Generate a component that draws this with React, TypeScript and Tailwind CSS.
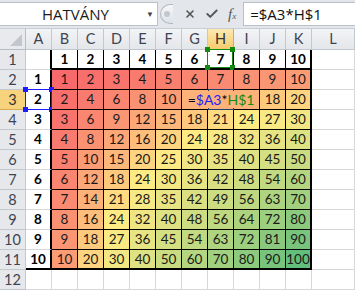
import React from "react";
import { X, Check } from "lucide-react";

const cols = ["A", "B", "C", "D", "E", "F", "G", "H", "I", "J", "K", "L"];
const rows = [1, 2, 3, 4, 5, 6, 7, 8, 9, 10, 11, 12];

// excel 3-colour scale: red -> yellow (median 24) -> green
function scaleColor(v: number) {
  const lo = [248, 105, 107];
  const mid = [255, 235, 132];
  const hi = [99, 190, 123];
  let a = lo;
  let b = mid;
  let t = (v - 1) / 23;
  if (v > 24) {
    a = mid;
    b = hi;
    t = (v - 24) / 76;
  }
  const c = a.map((x, i) => Math.round(x + (b[i] - x) * t));
  return `rgb(${c[0]},${c[1]},${c[2]})`;
}

function Handle({ pos, color }: { pos: string; color: string }) {
  return <span className={`absolute w-[5px] h-[5px] ${pos} ${color}`} />;
}

function Cell({ r, c }: { r: number; c: number }) {
  // c: 0 = A, 1..10 = B..K, 11 = L
  const base = "relative flex items-center justify-center text-[13.5px] border-r border-b";

  if (r === 12 || c === 11) {
    return <div className={`${base} border-[#d8d8d8]`} />;
  }

  if (c === 0) {
    const bottom = r === 11 ? "border-b-2 border-b-black" : "border-b-[#d8d8d8]";
    return (
      <div className={`${base} border-r-2 border-r-black ${bottom} font-bold text-black`}>
        {r > 1 ? r - 1 : ""}
        {r === 3 && (
          <span className="absolute -left-px -top-px -right-[2px] -bottom-px border-[1.5px] border-[#1d1dff]">
            <Handle pos="-left-[3px] -top-[3px]" color="bg-[#1d1dff]" />
            <Handle pos="-right-[3px] -top-[3px]" color="bg-[#1d1dff]" />
            <Handle pos="-left-[3px] -bottom-[3px]" color="bg-[#1d1dff]" />
            <Handle pos="-right-[3px] -bottom-[3px]" color="bg-[#1d1dff]" />
          </span>
        )}
      </div>
    );
  }

  const right = c === 10 ? "border-r-2" : "";
  if (r === 1) {
    return (
      <div className={`${base} ${right} border-b-2 border-black font-bold text-black`}>
        {c}
        {c === 7 && (
          <span className="absolute -left-px -top-px right-0 bottom-0 border-[1.5px] border-[#128a12]">
            <Handle pos="-left-[3px] -top-[3px]" color="bg-[#128a12]" />
            <Handle pos="-right-[3px] -top-[3px]" color="bg-[#128a12]" />
            <Handle pos="-left-[3px] -bottom-[3px]" color="bg-[#128a12]" />
            <Handle pos="-right-[3px] -bottom-[3px]" color="bg-[#128a12]" />
          </span>
        )}
      </div>
    );
  }

  const v = (r - 1) * c;
  const bottom = r === 11 ? "border-b-2" : "";

  // cell H3 is in edit mode, its text spills over G3 and I3
  if (r === 3 && c >= 6 && c <= 8) {
    const noRight = c === 6 || c === 7 ? "border-r-0" : "";
    return (
      <div className={`${base} ${noRight} border-black`} style={{ background: scaleColor(14) }}>
        {c === 7 && (
          <>
            <span className="absolute left-0 right-0 -top-px h-[2px] border-x border-t border-[#20406e]" />
            <span className="absolute left-0 right-0 -bottom-px h-[2px] border-x border-b border-[#20406e]" />
            <span className="relative z-10 whitespace-nowrap text-[14px]">
              <span className="text-black">=</span>
              <span className="text-[#1d1dff]">$A3</span>
              <span className="text-black">*</span>
              <span className="text-[#128a12]">H$1</span>
            </span>
          </>
        )}
      </div>
    );
  }

  return (
    <div className={`${base} ${right} ${bottom} border-black text-[#1a1a1a]`} style={{ background: scaleColor(v) }}>
      {v}
    </div>
  );
}

export default function App() {
  return (
    <div className="w-[355px] h-[291px] overflow-hidden bg-white font-['Lato',sans-serif]">
      {/* formula bar */}
      <div className="h-[29px] flex items-center bg-[#e3e7ec] border-b border-[#c9ced5]">
        <div className="h-[24px] w-[158px] bg-white border-y border-r border-[#b9c0c8] flex items-center pl-[42px] text-[15px] text-[#1a1a1a] font-['Open_Sans',sans-serif]">
          <span className="flex-1">HATVÁNY</span>
          <span className="text-[8px] text-[#444] mr-[3px]">▼</span>
        </div>
        <div className="ml-[2px] w-[13px] h-[20px] rounded-l-full border-y border-l border-[#b3b9c1] bg-gradient-to-b from-[#f6f7f9] to-[#dde1e6] flex items-center justify-center">
          <span className="w-[6px] h-[6px] rounded-full bg-[#c3c8ce]" />
        </div>
        <div className="flex items-center gap-[9px] ml-[11px] text-[#555]">
          <X size={12} strokeWidth={3.2} />
          <Check size={14} strokeWidth={3.2} />
          <span className="font-['Liberation_Serif',serif] italic text-[15px] leading-none">
            f<span className="text-[9px]">x</span>
          </span>
        </div>
        <div className="ml-[7px] flex-1 h-[24px] bg-white border-y border-l border-[#b9c0c8] flex items-center pl-[6px] text-[15px] text-[#111] font-['Open_Sans',sans-serif]">
          =$A3*H$1
        </div>
      </div>

      {/* sheet */}
      <div className="grid grid-cols-[26px_repeat(11,26px)_43px] grid-rows-[21px_repeat(12,20px)]">
        <div className="bg-[#e8eaee] border-r border-b border-[#b8bdc4] relative">
          <span className="absolute right-[3px] bottom-[3px] w-0 h-0 border-l-[12px] border-l-transparent border-b-[12px] border-b-[#c3c7cd]" />
        </div>
        {cols.map((c) => (
          <div
            key={c}
            className={`flex items-center justify-center text-[14.5px] border-r border-b ${
              c === "H"
                ? "bg-gradient-to-b from-[#fce9b0] to-[#f5cc6e] border-[#d9aa4e] text-[#333]"
                : "bg-gradient-to-b from-[#f3f4f6] to-[#e3e6ea] border-[#c3c8cf] text-[#3e4450]"
            }`}
          >
            {c}
          </div>
        ))}
        {rows.map((r) => (
          <React.Fragment key={r}>
            <div
              className={`flex items-center justify-center text-[14.5px] border-r border-b ${
                r === 3
                  ? "bg-[#f8d37e] border-[#d9aa4e] text-[#333]"
                  : "bg-[#e6e8ec] border-[#c3c8cf] text-[#3e4450]"
              }`}
            >
              {r}
            </div>
            {cols.map((_, ci) => (
              <Cell key={ci} r={r} c={ci} />
            ))}
          </React.Fragment>
        ))}
      </div>
    </div>
  );
}
